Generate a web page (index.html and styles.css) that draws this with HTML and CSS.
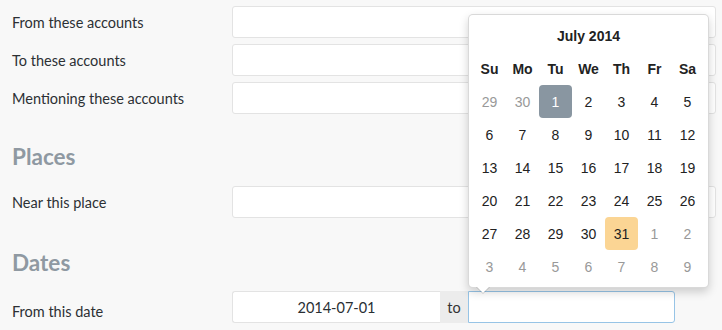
FILE: index.html
```html
<!DOCTYPE html>
<html lang="en">
<head>
<meta charset="utf-8">
<title>Advanced search</title>
<link rel="stylesheet" href="styles.css">
</head>
<body>
<div class="page">
  <div class="row">
    <label class="label">From these accounts</label>
    <input class="input" type="text">
  </div>
  <div class="row">
    <label class="label">To these accounts</label>
    <input class="input" type="text">
  </div>
  <div class="row">
    <label class="label">Mentioning these accounts</label>
    <input class="input" type="text">
  </div>

  <h2 class="section">Places</h2>
  <div class="row">
    <label class="label">Near this place</label>
    <input class="input" type="text">
  </div>

  <h2 class="section section-dates">Dates</h2>
  <div class="row">
    <label class="label label-low">From this date</label>
    <div class="date-group">
      <input class="input date-from" type="text" value="2014-07-01">
      <span class="addon">to</span>
      <input class="input date-to" type="text">
    </div>
  </div>

  <div class="datepicker">
    <div class="dp-grid">
      <div class="dp-title">July 2014</div>
      <div class="dp-dow">Su</div><div class="dp-dow">Mo</div><div class="dp-dow">Tu</div><div class="dp-dow">We</div><div class="dp-dow">Th</div><div class="dp-dow">Fr</div><div class="dp-dow">Sa</div>

      <div class="dp-day muted">29</div><div class="dp-day muted">30</div><div class="dp-day active">1</div><div class="dp-day">2</div><div class="dp-day">3</div><div class="dp-day">4</div><div class="dp-day">5</div>
      <div class="dp-day">6</div><div class="dp-day">7</div><div class="dp-day">8</div><div class="dp-day">9</div><div class="dp-day">10</div><div class="dp-day">11</div><div class="dp-day">12</div>
      <div class="dp-day">13</div><div class="dp-day">14</div><div class="dp-day">15</div><div class="dp-day">16</div><div class="dp-day">17</div><div class="dp-day">18</div><div class="dp-day">19</div>
      <div class="dp-day">20</div><div class="dp-day">21</div><div class="dp-day">22</div><div class="dp-day">23</div><div class="dp-day">24</div><div class="dp-day">25</div><div class="dp-day">26</div>
      <div class="dp-day">27</div><div class="dp-day">28</div><div class="dp-day">29</div><div class="dp-day">30</div><div class="dp-day today">31</div><div class="dp-day muted">1</div><div class="dp-day muted">2</div>
      <div class="dp-day muted">3</div><div class="dp-day muted">4</div><div class="dp-day muted">5</div><div class="dp-day muted">6</div><div class="dp-day muted">7</div><div class="dp-day muted">8</div><div class="dp-day muted">9</div>
    </div>
  </div>
</div>
</body>
</html>
```

FILE: styles.css
```css
html, body {
  margin: 0;
  padding: 0;
  background: #f8f8f8;
}

.page {
  position: relative;
  padding: 6px 6px 0 12px;
  font-family: "Lato", "Open Sans", sans-serif;
  color: #292f33;
  height: 330px;
  box-sizing: border-box;
  overflow: hidden;
}

.row {
  display: flex;
  align-items: center;
  margin-bottom: 6px;
}

.label {
  width: 220px;
  flex: none;
  font-size: 14.5px;
  color: #2c3034;
}

.label-low {
  padding-top: 8px;
}

.input {
  flex: 1;
  height: 32px;
  box-sizing: border-box;
  border: 1px solid #e3e3e3;
  border-radius: 3px;
  background: #fff;
  font-family: "Lato", "Open Sans", sans-serif;
  font-size: 14.5px;
  color: #292f33;
  padding: 0 8px;
  margin: 0;
  outline: none;
}

.section {
  margin: 29px 0 15px;
  font-size: 22.5px;
  line-height: 28px;
  font-weight: 700;
  color: #8f99a2;
}

.section-dates {
  margin: 31px 0 14px;
}

.date-group {
  display: flex;
  width: 443px;
  height: 32px;
}

.date-from {
  flex: none;
  width: 208px;
  text-align: center;
  border-radius: 3px 0 0 3px;
  border-right: 0;
}

.addon {
  flex: none;
  width: 28px;
  height: 32px;
  box-sizing: border-box;
  background: #ececec;
  font-size: 14.5px;
  color: #333;
  display: flex;
  align-items: center;
  justify-content: center;
}

.date-to {
  flex: none;
  width: 207px;
  border: 1px solid #97c4e6;
  border-radius: 0 3px 3px 0;
}

.datepicker {
  position: absolute;
  left: 468px;
  top: 14px;
  padding: 4px;
  background: #fff;
  border: 1px solid rgba(0, 0, 0, 0.15);
  border-radius: 5px;
  box-shadow: 0 4px 10px rgba(0, 0, 0, 0.18);
  font-family: "Liberation Sans", Arial, sans-serif;
  font-size: 14px;
}

.datepicker::before {
  content: "";
  position: absolute;
  left: 7px;
  bottom: -7px;
  border-left: 7px solid transparent;
  border-right: 7px solid transparent;
  border-top: 7px solid rgba(0, 0, 0, 0.15);
}

.datepicker::after {
  content: "";
  position: absolute;
  left: 8px;
  bottom: -6px;
  border-left: 6px solid transparent;
  border-right: 6px solid transparent;
  border-top: 6px solid #fff;
}

.dp-grid {
  display: grid;
  grid-template-columns: repeat(7, 33px);
  grid-auto-rows: 33px;
}

.dp-title {
  grid-column: 1 / -1;
  display: flex;
  align-items: center;
  justify-content: center;
  font-weight: 700;
  color: #222;
}

.dp-dow {
  display: flex;
  align-items: center;
  justify-content: center;
  font-weight: 700;
  color: #222;
}

.dp-day {
  display: flex;
  align-items: center;
  justify-content: center;
  color: #222;
  border-radius: 4px;
}

.dp-day.muted {
  color: #999;
}

.dp-day.active {
  background: #8996a1;
  color: #fff;
}

.dp-day.today {
  background: #fbd594;
  color: #222;
}
```
